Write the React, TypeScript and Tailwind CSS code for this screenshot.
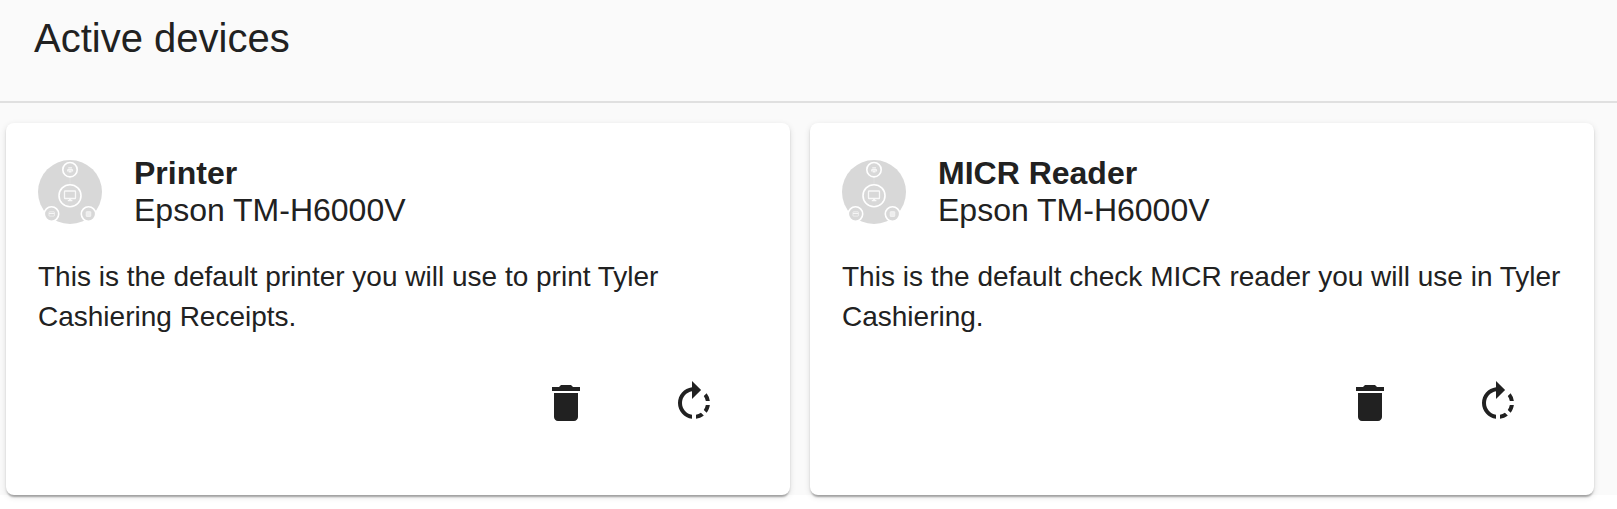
import React from "react";
import { MdDelete, MdRotateRight } from "react-icons/md";

interface Device {
  type: string;
  model: string;
  description: string;
}

const devices: Device[] = [
  {
    type: "Printer",
    model: "Epson TM-H6000V",
    description:
      "This is the default printer you will use to print Tyler Cashiering Receipts.",
  },
  {
    type: "MICR Reader",
    model: "Epson TM-H6000V",
    description:
      "This is the default check MICR reader you will use in Tyler Cashiering.",
  },
];

// Round placeholder: a monitor with three peripherals around it
const DeviceAvatar: React.FC = () => (
  <svg viewBox="0 0 64 64" className="h-16 w-16 shrink-0 overflow-visible">
    <circle cx="32" cy="32" r="32" fill="#d8d8d8" />
    <path d="M32 17v7" stroke="#dedede" strokeWidth="1" />
    <g fill="#d8d8d8" stroke="#fff" strokeWidth="1.6">
      <circle cx="32" cy="9.7" r="7.2" />
      <circle cx="32" cy="35.7" r="11" />
      <circle cx="13.5" cy="54" r="7.2" />
      <circle cx="50.5" cy="54" r="7.2" />
    </g>
    {/* monitor */}
    <rect x="26.5" y="31" width="11" height="7.5" rx="0.6" fill="none" stroke="#f8f8f8" strokeWidth="1.3" />
    <path d="M31 38.8h2.2v1.2h1.2v1.2h-4.6V40H31z" fill="#f8f8f8" />
    {/* printer */}
    <path d="M30.2 7.3h3.8v1.2h-3.8zM30.1 8.9h4a1 1 0 0 1 1 1v1.6h-1.2v-.7h-3.6v.7h-1.2V9.9a1 1 0 0 1 1-1zM30.6 11h3v1.6h-3z" fill="#f6f6f6" />
    {/* card */}
    <rect x="11" y="51.8" width="5.4" height="4.3" rx="0.4" fill="none" stroke="#f2f2f2" strokeWidth="0.8" />
    <path d="M11 52.9h5.4v1.2H11z" fill="#f6f6f6" />
    {/* receipt */}
    <rect x="48.2" y="51.7" width="4.6" height="4.7" rx="0.4" fill="#eee" stroke="#f6f6f6" strokeWidth="0.8" />
  </svg>
);

const DeviceCard: React.FC<{ device: Device }> = ({ device }) => (
  <div className="flex h-[372px] w-[784px] flex-col rounded-lg bg-white px-8 pt-8 shadow-[0_4px_2px_-2px_rgba(0,0,0,0.2),0_2px_2px_0_rgba(0,0,0,0.14),0_2px_6px_0_rgba(0,0,0,0.12)]">
    <div className="flex gap-8 pt-[5px]">
      <DeviceAvatar />
      <div className="-mt-[5px] text-[32px] leading-[37px]">
        <h2 className="font-bold">{device.type}</h2>
        <p>{device.model}</p>
      </div>
    </div>

    <p className="mt-7 text-[28px] leading-10">{device.description}</p>

    <div className="mt-[18px] flex justify-end gap-8 pr-4">
      <button type="button" aria-label="Remove device" className="flex h-24 w-24 items-center justify-center">
        <MdDelete size={48} />
      </button>
      <button type="button" aria-label="Reset device" className="flex h-24 w-24 items-center justify-center">
        <MdRotateRight size={48} />
      </button>
    </div>
  </div>
);

const App: React.FC = () => {
  return (
    <div className="min-h-screen bg-white font-['Liberation_Sans',Arial,sans-serif] text-[#212121]">
      <div className="h-[495px] bg-[#fafafa]">
        <header className="h-[103px] border-b-2 border-[#e0e0e0] px-[34px] pt-[15px]">
          <h1 className="text-[40px] leading-[46px]">Active devices</h1>
        </header>

        <div className="flex gap-5 pt-5 pl-1.5">
          {devices.map((device) => (
            <DeviceCard key={device.type} device={device} />
          ))}
        </div>
      </div>
    </div>
  );
};

export default App;
